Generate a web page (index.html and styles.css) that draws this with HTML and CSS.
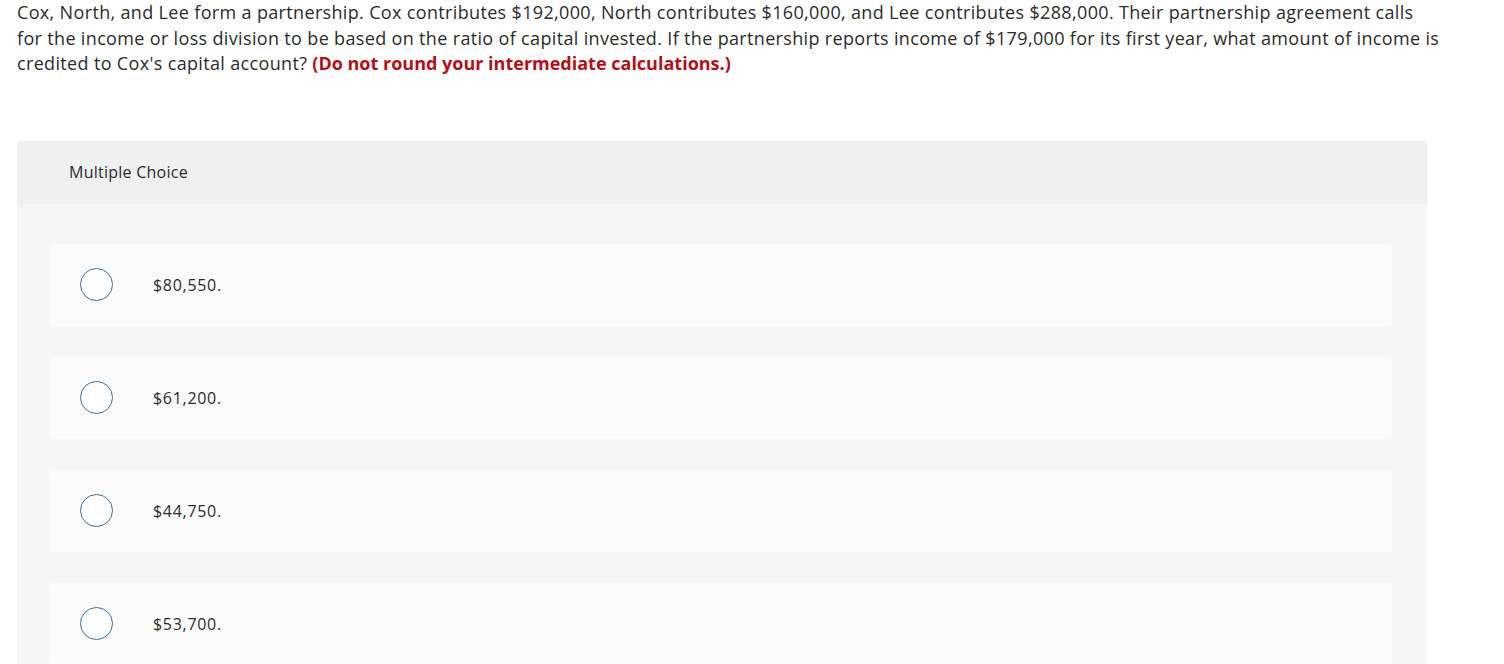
FILE: index.html
```html
<!DOCTYPE html>
<html>
<head>
<meta charset="utf-8">
<link rel="stylesheet" href="styles.css">
</head>
<body>
<div class="page">
  <p class="question">Cox, North, and Lee form a partnership. Cox contributes $192,000, North contributes $160,000, and Lee contributes $288,000. Their partnership agreement calls for the income or loss division to be based on the ratio of capital invested. If the partnership reports income of $179,000 for its first year, what amount of income is credited to Cox's capital account? <strong class="note">(Do not round your intermediate calculations.)</strong></p>

  <div class="panel">
    <div class="panel-header">Multiple Choice</div>
    <div class="choices">
      <label class="choice"><span class="radio"></span><span class="choice-text">$80,550.</span></label>
      <label class="choice"><span class="radio"></span><span class="choice-text">$61,200.</span></label>
      <label class="choice"><span class="radio"></span><span class="choice-text">$44,750.</span></label>
      <label class="choice"><span class="radio"></span><span class="choice-text">$53,700.</span></label>
    </div>
  </div>
</div>
</body>
</html>
```
FILE: styles.css
```css
html, body {
  margin: 0;
  padding: 0;
  background: #ffffff;
}
body {
  font-family: "Open Sans", Lato, sans-serif;
  color: #2b2b2b;
}
.page {
  padding: 0 0 0 17px;
  width: 1424px;
}
.question {
  margin: 0;
  font-size: 18px;
  line-height: 25.5px;
  letter-spacing: 0.34px;
}
.note {
  color: #b30f1b;
  font-weight: 700;
  letter-spacing: 0;
}
.panel {
  margin-top: 64px;
  width: 1410px;
  background: #f5f5f5;
  border-radius: 4px 4px 0 0;
  overflow: hidden;
}
.panel-header {
  background: #f0f0f0;
  height: 63px;
  padding-left: 52px;
  display: flex;
  align-items: center;
  font-size: 16px;
  letter-spacing: 0.25px;
}
.choices {
  padding: 40px 35px 0 32px;
  display: flex;
  flex-direction: column;
  gap: 31px;
}
.choice {
  height: 82px;
  background: #fafafa;
  border-radius: 4px;
  display: flex;
  align-items: center;
  padding-left: 31px;
}
.radio {
  width: 31px;
  height: 31px;
  border: 1.6px solid #3b6a9e;
  border-radius: 50%;
  background: #ffffff;
  flex: none;
}
.choice-text {
  margin-left: 40px;
  font-size: 16px;
  letter-spacing: 0.7px;
}
```
